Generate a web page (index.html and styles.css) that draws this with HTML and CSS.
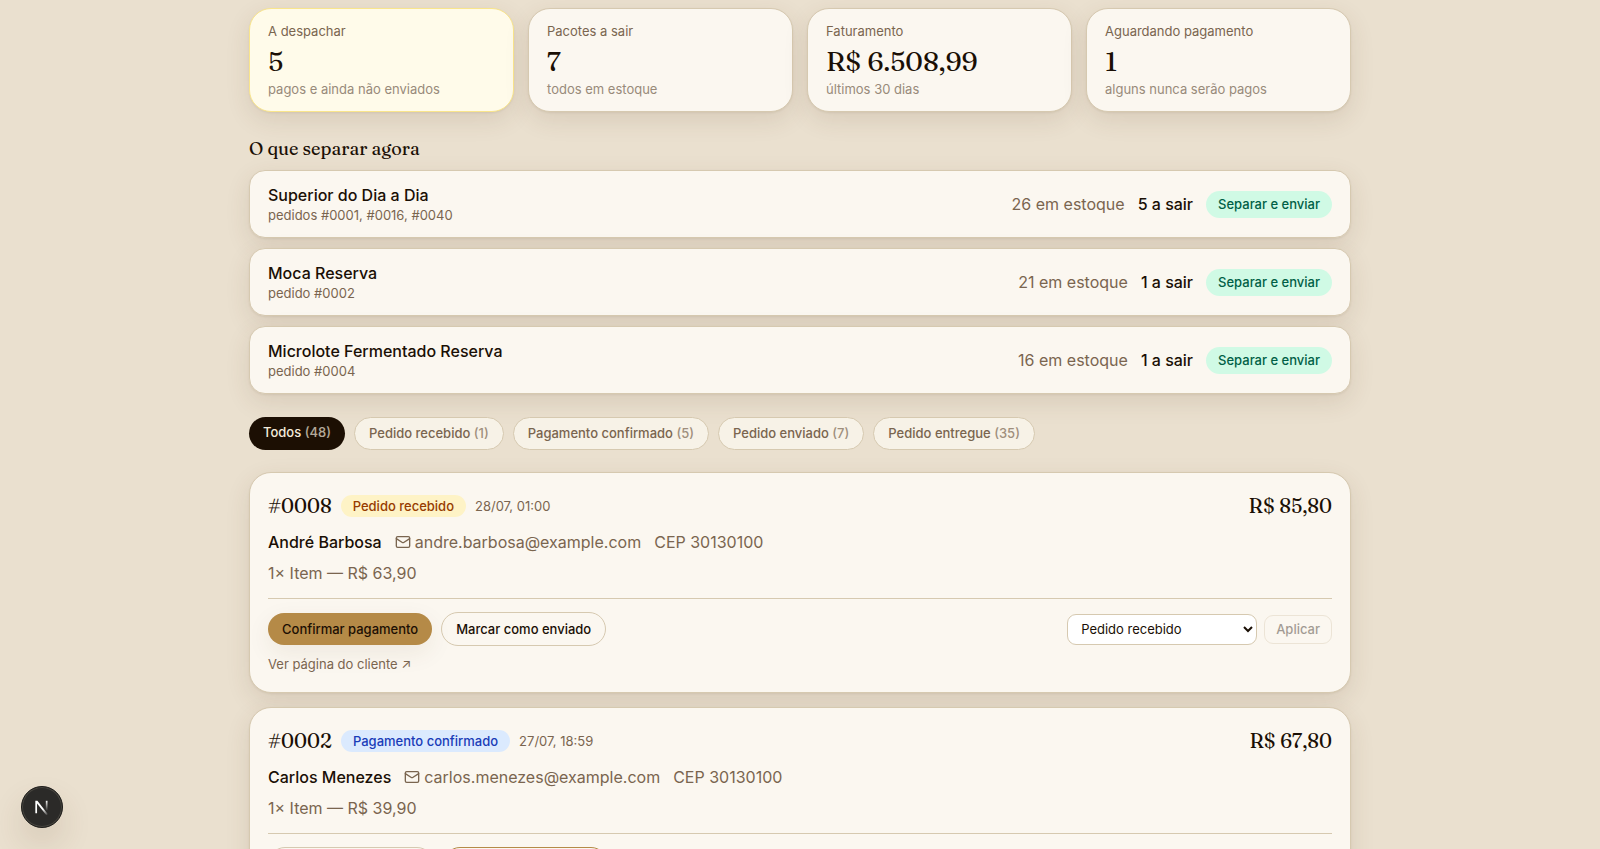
FILE: index.html
```
<!DOCTYPE html>
<html lang="pt-BR">
<head>
    <meta charset="UTF-8">
    <meta name="viewport" content="width=device-width, initial-scale=1.0">
    <title>Pedidos</title>
    <link rel="stylesheet" href="styles.css">
</head>
<body>

    <main class="page">

        <section class="stats">
            <div class="stat stat-alert">
                <p class="stat-label">A despachar</p>
                <p class="stat-value">5</p>
                <p class="stat-hint">pagos e ainda não enviados</p>
            </div>
            <div class="stat">
                <p class="stat-label">Pacotes a sair</p>
                <p class="stat-value">7</p>
                <p class="stat-hint">todos em estoque</p>
            </div>
            <div class="stat">
                <p class="stat-label">Faturamento</p>
                <p class="stat-value">R$ 6.508,99</p>
                <p class="stat-hint">últimos 30 dias</p>
            </div>
            <div class="stat">
                <p class="stat-label">Aguardando pagamento</p>
                <p class="stat-value">1</p>
                <p class="stat-hint">alguns nunca serão pagos</p>
            </div>
        </section>

        <section class="picking">
            <h2>O que separar agora</h2>
            <ul class="pick-list">
                <li class="pick">
                    <div class="pick-info">
                        <p class="pick-name">Superior do Dia a Dia</p>
                        <p class="pick-orders">pedidos #0001, #0016, #0040</p>
                    </div>
                    <span class="pick-stock">26 em estoque</span>
                    <span class="pick-out">5 a sair</span>
                    <span class="tag tag-ok">Separar e enviar</span>
                </li>
                <li class="pick">
                    <div class="pick-info">
                        <p class="pick-name">Moca Reserva</p>
                        <p class="pick-orders">pedido #0002</p>
                    </div>
                    <span class="pick-stock">21 em estoque</span>
                    <span class="pick-out">1 a sair</span>
                    <span class="tag tag-ok">Separar e enviar</span>
                </li>
                <li class="pick">
                    <div class="pick-info">
                        <p class="pick-name">Microlote Fermentado Reserva</p>
                        <p class="pick-orders">pedido #0004</p>
                    </div>
                    <span class="pick-stock">16 em estoque</span>
                    <span class="pick-out">1 a sair</span>
                    <span class="tag tag-ok">Separar e enviar</span>
                </li>
            </ul>
        </section>

        <nav class="filters">
            <a class="filter active" href="#todos">Todos <span class="count">(48)</span></a>
            <a class="filter" href="#recebido">Pedido recebido <span class="count">(1)</span></a>
            <a class="filter" href="#confirmado">Pagamento confirmado <span class="count">(5)</span></a>
            <a class="filter" href="#enviado">Pedido enviado <span class="count">(7)</span></a>
            <a class="filter" href="#entregue">Pedido entregue <span class="count">(35)</span></a>
        </nav>

        <section class="orders">
            <article class="order">
                <header class="order-head">
                    <h3>#0008</h3>
                    <span class="status status-received">Pedido recebido</span>
                    <time class="order-date">28/07, 01:00</time>
                    <span class="order-total">R$ 85,80</span>
                </header>
                <div class="customer">
                    <span class="customer-name">André Barbosa</span>
                    <a class="email" href="mailto:andre.barbosa@example.com">
                        <svg class="icon" viewBox="0 0 24 24" aria-hidden="true"><rect x="2" y="4" width="20" height="16" rx="2"/><path d="m22 7-8.97 5.7a1.94 1.94 0 0 1-2.06 0L2 7"/></svg>
                        andre.barbosa@example.com
                    </a>
                    <span>CEP 30130100</span>
                </div>
                <p class="items">1× Item — R$ 63,90</p>
                <div class="actions">
                    <button class="btn btn-primary" type="button">Confirmar pagamento</button>
                    <button class="btn" type="button">Marcar como enviado</button>
                    <form class="change">
                        <select class="select" aria-label="Status do pedido #0008">
                            <option selected>Pedido recebido</option>
                            <option>Pagamento confirmado</option>
                            <option>Pedido enviado</option>
                            <option>Pedido entregue</option>
                        </select>
                        <button class="apply" type="submit" disabled>Aplicar</button>
                    </form>
                    <a class="client-link" href="#pedido-0008">Ver página do cliente ↗</a>
                </div>
            </article>

            <article class="order">
                <header class="order-head">
                    <h3>#0002</h3>
                    <span class="status status-paid">Pagamento confirmado</span>
                    <time class="order-date">27/07, 18:59</time>
                    <span class="order-total">R$ 67,80</span>
                </header>
                <div class="customer">
                    <span class="customer-name">Carlos Menezes</span>
                    <a class="email" href="mailto:carlos.menezes@example.com">
                        <svg class="icon" viewBox="0 0 24 24" aria-hidden="true"><rect x="2" y="4" width="20" height="16" rx="2"/><path d="m22 7-8.97 5.7a1.94 1.94 0 0 1-2.06 0L2 7"/></svg>
                        carlos.menezes@example.com
                    </a>
                    <span>CEP 30130100</span>
                </div>
                <p class="items">1× Item — R$ 39,90</p>
                <div class="actions">
                    <button class="btn" type="button">Confirmar pagamento</button>
                    <button class="btn btn-accent" type="button">Marcar como enviado</button>
                </div>
            </article>
        </section>

    </main>

    <button class="dev-badge" type="button" aria-label="Ferramentas">
        <svg viewBox="0 0 42 42" aria-hidden="true">
            <defs>
                <linearGradient id="fadeDiagonal" gradientUnits="userSpaceOnUse" x1="22" y1="23" x2="27" y2="30">
                    <stop offset="0" stop-color="#fff"/>
                    <stop offset="1" stop-color="#fff" stop-opacity="0"/>
                </linearGradient>
                <linearGradient id="fadeStem" gradientUnits="userSpaceOnUse" x1="26" y1="14" x2="26" y2="25">
                    <stop offset="0" stop-color="#fff"/>
                    <stop offset="1" stop-color="#fff" stop-opacity="0"/>
                </linearGradient>
            </defs>
            <path d="M14 14.500H16.200L27.200 28.600L25.600 29.600L15.800 17.200V27.500H14Z" fill="url(#fadeDiagonal)"/>
            <path d="M25 14.500H26.800V25H25Z" fill="url(#fadeStem)"/>
        </svg>
    </button>

</body>
</html>
```
FILE: styles.css
```
* {
    box-sizing: border-box;
}

html {
    scrollbar-width: none;
}

body {
    margin: 0;
    background-color: #eae0cf;
    color: #1a0f05;
    font-family: Inter, sans-serif;
    font-size: 16px;
    line-height: 24px;
}

h2, h3, p, ul {
    margin: 0;
    padding: 0;
}

a {
    color: inherit;
    text-decoration: none;
}

.page {
    max-width: 1140px;
    margin: 0 auto;
    padding: 8px 19px;
}

/* --- cards --- */
.stat, .pick, .order {
    background-color: #fbf7f0;
    border: 1px solid #d6c9b0;
    box-shadow: 0 1px 2px rgba(90, 60, 30, 0.08), 0 8px 24px rgba(90, 60, 30, 0.12);
}

/* --- stats --- */
.stats {
    display: grid;
    grid-template-columns: repeat(4, 1fr);
    gap: 14px;
}

.stat {
    padding: 13px 18px;
    border-radius: 22px;
}

.stat-alert {
    background-color: #fffbea;
    border-color: #f9e58c;
}

.stat-label, .stat-hint {
    font-size: 13px;
    line-height: 18px;
    color: #7a654f;
}

.stat-hint {
    color: #988a7a;
}

.stat-value {
    padding-top: 3px;
    font-family: Fraunces, "Liberation Serif", serif;
    font-size: 27px;
    line-height: 37px;
}

/* --- picking list --- */
.picking {
    margin-top: 25px;
}

h2 {
    font-family: Fraunces, "Liberation Serif", serif;
    font-size: 18px;
    font-weight: 500;
    line-height: 24px;
}

.pick-list {
    display: grid;
    gap: 10px;
    margin-top: 9px;
    list-style: none;
}

.pick {
    display: flex;
    align-items: center;
    gap: 13px;
    padding: 13px 18px;
    border-radius: 16px;
}

.pick-info {
    flex: 1;
}

.pick-name, .pick-out, .customer-name {
    color: #1a0f05;
    font-weight: 500;
}

.pick-name {
    line-height: 22px;
}

.pick-orders {
    font-size: 13px;
    line-height: 18px;
    color: #7a654f;
}

.pick-stock {
    color: #7a654f;
}

.tag, .status {
    border-radius: 999px;
    font-size: 13px;
    font-weight: 500;
}

.tag {
    padding: 4px 12px;
    line-height: 19px;
}

.tag-ok {
    background-color: #d0fae5;
    color: #006045;
}

/* --- filters --- */
.filters {
    display: flex;
    flex-wrap: wrap;
    gap: 9px;
    margin-top: 23px;
}

.filter {
    padding: 6px 14px;
    border: 1px solid #d6c9b0;
    border-radius: 999px;
    background-color: #f7f2e7;
    color: #7a654f;
    font-size: 13px;
    font-weight: 500;
    line-height: 19px;
}

.filter.active {
    border: none;
    background-color: #1c0f03;
    color: #f3eadb;
}

.count {
    opacity: 0.7;
}

/* --- orders --- */
.orders {
    display: grid;
    gap: 14px;
    margin-top: 22px;
}

.order {
    padding: 18px 18px 19px;
    border-radius: 22px;
}

.order-head, .customer {
    display: flex;
    align-items: center;
}

.order-head {
    gap: 9px;
}

h3, .order-total {
    font-family: Fraunces, "Liberation Serif", serif;
    font-size: 20px;
    font-weight: 400;
    line-height: 30px;
}

.order-total {
    margin-left: auto;
    font-weight: 500;
}

.status {
    padding: 1px 12px;
    line-height: 20px;
}

.status-received {
    background-color: #fef3c6;
    color: #973c00;
}

.status-paid {
    background-color: #dbeafe;
    color: #193cb8;
}

.order-date {
    font-size: 13px;
    color: #7a654f;
}

.customer {
    gap: 13px;
    margin-top: 9px;
    color: #7a654f;
}

.email {
    display: flex;
    align-items: center;
    gap: 4px;
}

.icon {
    width: 16px;
    height: 16px;
    fill: none;
    stroke: currentColor;
    stroke-width: 2;
    stroke-linecap: round;
    stroke-linejoin: round;
}

.items {
    margin-top: 7px;
    color: #7a654f;
}

.actions {
    display: flex;
    flex-wrap: wrap;
    align-items: center;
    gap: 9px;
    margin-top: 13px;
    padding-top: 13px;
    border-top: 1px solid #d6c9b0;
}

.btn {
    padding: 6px 14px;
    border: 1px solid #d6c9b0;
    border-radius: 999px;
    background-color: transparent;
    color: #1a0f05;
    font-family: inherit;
    font-size: 13px;
    font-weight: 500;
    line-height: 20px;
}

.btn-primary {
    border: none;
    background-color: #b58a47;
    color: #1c0f03;
    box-shadow: 0 8px 24px rgba(90, 60, 30, 0.08);
}

.btn-accent {
    border-color: #b58a47;
}

.change {
    display: flex;
    align-items: center;
    gap: 7px;
    margin-left: auto;
}

.select {
    width: 190px;
    height: 31px;
    padding: 0 9px;
    border: 1px solid #d6c9b0;
    border-radius: 9px;
    background-color: #fff;
    color: #1a0f05;
    font-family: inherit;
    font-size: 13px;
}

.apply {
    padding: 4px 11px;
    border: 1px solid #d6c9b0;
    border-radius: 9px;
    background-color: transparent;
    color: #1a0f05;
    font-family: inherit;
    font-size: 13px;
    font-weight: 500;
    line-height: 19px;
    opacity: 0.4;
}

.client-link {
    flex-basis: 100%;
    font-size: 13px;
    line-height: 18px;
    color: #7a654f;
}

/* --- floating badge --- */
.dev-badge {
    position: fixed;
    left: 21px;
    bottom: 21px;
    width: 42px;
    height: 42px;
    padding: 0;
    border: 1px solid #1d1c1a;
    border-radius: 50%;
    background-color: #2b2a28;
    box-shadow: inset 0 0 0 1px #47453f, 0 16px 32px rgba(90, 60, 30, 0.14);
}

.dev-badge svg {
    display: block;
    width: 100%;
    height: 100%;
}
```
